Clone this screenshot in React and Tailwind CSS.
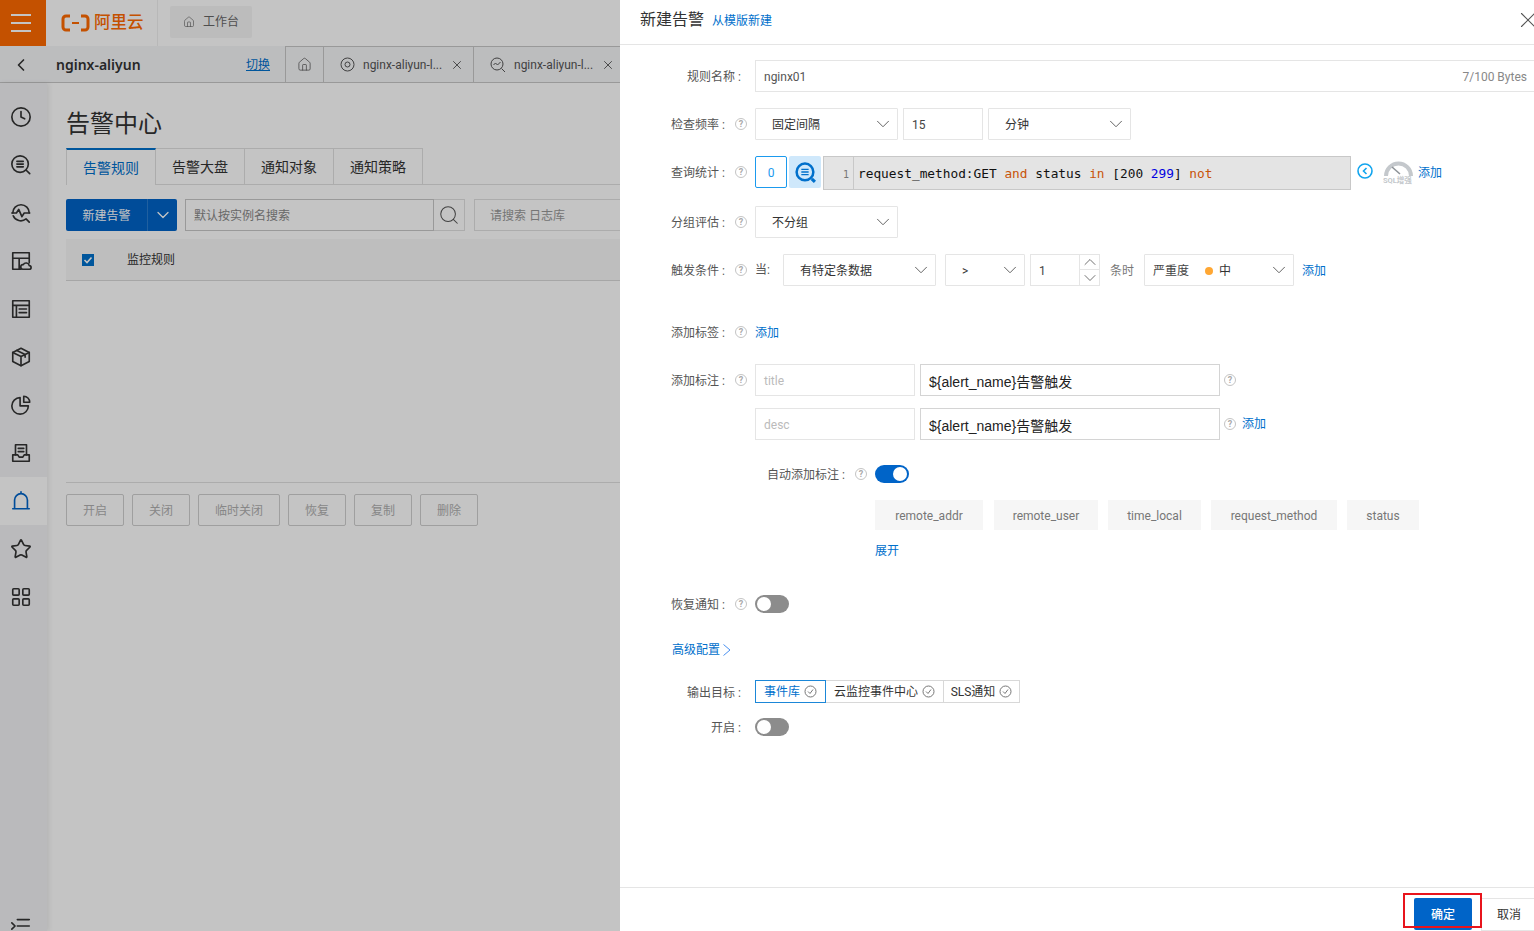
import React from "react";
import { ChevronDown, ChevronUp, ChevronLeft, Search, X, Star, LayoutGrid, Clock, House } from "lucide-react";

const I = ({ children, size = 22, vb = 24, color = "#333", w = 1.8, className = "" }) => (
  <svg width={size} height={size} viewBox={`0 0 ${vb} ${vb}`} fill="none" stroke={color} strokeWidth={w} strokeLinecap="round" strokeLinejoin="round" className={className}>
    {children}
  </svg>
);

const SideItem = ({ active, children }) => (
  <div className={"h-12 flex items-center justify-center pr-[5px] " + (active ? "bg-white" : "")}>{children}</div>
);

function Sidebar() {
  return (
    <div className="w-[47px] shrink-0 bg-[#f2f3f5] shadow-[2px_0_5px_rgba(0,0,0,0.08)] flex flex-col pt-[10px] relative">
      <SideItem><Clock size={22} strokeWidth={1.8} color="#333" /></SideItem>
      <SideItem>
        <I><circle cx="11" cy="11" r="9" /><path d="M7.5 8h7M7.5 11h7M7.5 14h7M18 18l3.5 3.5" /></I>
      </SideItem>
      <SideItem>
        <I><path d="M3 12a9 9 0 1 1 18 0M3.5 15a9 9 0 0 0 14 3.5l3.5 3.5" /><path d="M2 12h5l2.5-4 3.5 8 2.5-4h6" /></I>
      </SideItem>
      <SideItem>
        <I><path d="M3 3h18v11M3 3v18h9M3 9h18M10 9v12" /><path d="M14 21a2.5 2.5 0 0 1 .5-5 3.5 3.5 0 0 1 6.5 1 2 2 0 0 1 0 4z" /></I>
      </SideItem>
      <SideItem>
        <I><rect x="3" y="3" width="18" height="18" /><path d="M3 8h18M7 8v13M10 12h8M10 16h8" /></I>
      </SideItem>
      <SideItem>
        <I><path d="M12 2.5 21 7v10l-9 4.500L3 17V7z" /><path d="M3 7l9 4.500L21 7M12 11.500V21.500M7.500 4.800l9 4.500v3" /></I>
      </SideItem>
      <SideItem>
        <I><path d="M11 4a9 9 0 1 0 9 9h-9z" /><path d="M15 2.500a6.500 6.500 0 0 1 6.500 6.500H15z" /></I>
      </SideItem>
      <SideItem>
        <I><path d="M6 14V3h12v11M9 7h6M9 10.500h6" /><path d="M3 14h5.500l1.500 2.500h4l1.500-2.500H21v7H3z" /></I>
      </SideItem>
      <SideItem active>
        <I color="#0064c8"><path d="M5 20V11a7 7 0 0 1 14 0v9M3 20.500h18M12 3V2" /></I>
      </SideItem>
      <SideItem><Star size={22} strokeWidth={1.8} color="#333" /></SideItem>
      <SideItem><LayoutGrid size={22} strokeWidth={1.8} color="#333" /></SideItem>
      <div className="mt-auto h-[16px] flex justify-center overflow-hidden pr-[5px]">
        <I className="shrink-0"><path d="M8 5h13M8 12h13M8 19h13M2 8.500 5.500 12 2 15.500" /></I>
      </div>
    </div>
  );
}

const AppTab = ({ icon, wide }) => (
  <div className={"border-l border-[#c8c8c8] h-full flex items-center " + (wide ? "w-[150px] pl-[16px]" : "w-[38px] justify-center")}>
    {icon}
    {wide && (
      <>
        <span className="ml-[8px] text-[#555] text-xs w-[84px] whitespace-nowrap pt-[1px]">nginx-aliyun-l...</span>
        <X size={14} strokeWidth={1.3} color="#333" className="ml-[3px] mt-[1px]" />
      </>
    )}
  </div>
);

const PageTab = ({ active, children, w }) => (
  <div className={"h-[36px] flex items-center justify-center text-sm border-r border-[#e0e0e0] " + w + " " + (active ? "border-t-2 border-t-[#0070cc] text-[#0070cc] bg-white mb-[-1px] h-[37px] border-l border-l-[#e0e0e0]" : "border-t text-[#333] border-t-[#e0e0e0]")}>
    {children}
  </div>
);

const Disabled = ({ children, w }) => (
  <div className={"h-[32px] rounded-[2px] border border-[#cfcfcf] text-[#b0b0b0] text-xs flex items-center justify-center pt-[1px] " + w}>{children}</div>
);

function LeftPage() {
  return (
    <div className="w-[620px] h-full shrink-0 relative overflow-hidden bg-white flex flex-col">
      <div className="h-[46px] flex shrink-0 bg-white">
        <div className="w-[46px] bg-[#ff6a00] flex flex-col items-center justify-center gap-[6px] pr-[4px]">
          <span className="w-[20px] h-[2px] bg-white" />
          <span className="w-[20px] h-[2px] bg-white" />
          <span className="w-[20px] h-[2px] bg-white" />
        </div>
        <div className="w-[112px] border-r border-[#f0f0f0] flex items-center pl-[15px] gap-[4px]">
          <svg width="29" height="18" viewBox="0 0 29 18" fill="none" stroke="#ff6a00" strokeWidth="3" className="shrink-0">
            <path d="M9 2H5a3 3 0 0 0-3 3v8a3 3 0 0 0 3 3h4M20 2h4a3 3 0 0 1 3 3v8a3 3 0 0 1-3 3h-4" />
            <path d="M11 9h7" strokeWidth="2" />
          </svg>
          <span className="text-[#ff6a00] text-[16.5px] font-medium leading-none whitespace-nowrap">阿里云</span>
        </div>
        <div className="ml-[12px] mt-[6px] w-[82px] h-[32px] bg-[#f5f5f5] rounded-[2px] flex items-center justify-center gap-[8px] text-xs text-[#666]">
          <House size={12} strokeWidth={1.3} color="#666" />
          工作台
        </div>
      </div>
      <div className="h-[37px] flex shrink-0 bg-[#f5f6f8] border-b border-[#c8c8c8]">
        <div className="w-[285px] shrink-0 flex items-center pt-[1px]">
          <ChevronLeft size={20} strokeWidth={2} color="#333" className="ml-[11px]" />
          <span className="ml-[25px] text-sm font-semibold text-[#333] font-['Noto_Sans',sans-serif]">nginx-aliyun</span>
          <span className="ml-[auto] mr-[15px] text-xs underline text-[#0070cc]">切换</span>
        </div>
        <div className="flex flex-1 border-t border-[#c8c8c8]">
          <AppTab icon={<House size={15} strokeWidth={1.2} color="#555" />} />
          <AppTab wide icon={<svg width="15" height="15" viewBox="0 0 15 15" fill="none" stroke="#555" className="shrink-0"><circle cx="7.500" cy="7.500" r="6.500" /><circle cx="7.500" cy="7.500" r="2.500" /></svg>} />
          <AppTab wide icon={<svg width="16" height="16" viewBox="0 0 16 16" fill="none" stroke="#555" className="shrink-0"><circle cx="7" cy="7" r="6" /><path d="M3.500 8l2-2 2 2 3-3M11.500 11.500 15 15" /></svg>} />
        </div>
      </div>
      <div className="flex flex-1 min-h-0">
        <Sidebar />
        <div className="flex-1 pl-[19px] min-w-0">
          <div className="mt-[25px] text-2xl leading-[32px] text-[#333]">告警中心</div>
          <div className="mt-[8px] flex border-b border-[#e0e0e0]">
            <PageTab active w="w-[90px]">告警规则</PageTab>
            <PageTab w="w-[89px]">告警大盘</PageTab>
            <PageTab w="w-[89px]">通知对象</PageTab>
            <PageTab w="w-[89px]">通知策略</PageTab>
          </div>
          <div className="mt-[14px] flex">
            <div className="w-[111px] h-[32px] rounded-[2px] bg-[#0064c8] flex text-white text-xs">
              <div className="w-[81px] flex items-center justify-center pt-[1px]">新建告警</div>
              <div className="flex-1 border-l border-[#2a7dd0] flex items-center justify-center">
                <ChevronDown size={20} strokeWidth={1.5} color="#fff" />
              </div>
            </div>
            <div className="ml-[8px] w-[249px] h-[32px] border border-[#c8c8c8] flex items-center pl-[8px] pt-[1px] text-xs text-[#888]">默认按实例名搜索</div>
            <div className="w-[31px] h-[32px] border border-l-0 border-[#e0e0e0] flex items-center justify-center">
              <Search size={22} strokeWidth={1.1} color="#555" />
            </div>
            <div className="ml-[9px] flex-1 h-[32px] border border-r-0 border-[#e0e0e0] flex items-center pl-[15px] pt-[1px] text-xs text-[#999]">请搜索 日志库</div>
          </div>
          <div className="mt-[8px] h-[42px] bg-[#f7f7f7] border-b border-[#d8d8d8] flex items-center pl-[16px]">
            <span className="w-[12px] h-[12px] bg-[#0070cc] flex items-center justify-center">
              <svg width="10" height="10" viewBox="0 0 10 10" fill="none" stroke="#fff" strokeWidth="1.600"><path d="M1.500 5l2.500 2.500 4.500-5" /></svg>
            </span>
            <span className="ml-[33px] text-xs text-[#333] pt-[1px]">监控规则</span>
          </div>
          <div className="mt-[201px] border-t border-[#e0e0e0] pt-[11px] flex gap-[8px]">
            <Disabled w="w-[58px]">开启</Disabled>
            <Disabled w="w-[58px]">关闭</Disabled>
            <Disabled w="w-[82px]">临时关闭</Disabled>
            <Disabled w="w-[58px]">恢复</Disabled>
            <Disabled w="w-[58px]">复制</Disabled>
            <Disabled w="w-[58px]">删除</Disabled>
          </div>
        </div>
      </div>
      <div className="absolute inset-0 bg-[rgba(0,0,0,0.23)]" />
    </div>
  );
}

const Help = ({ className = "" }) => (
  <span className={"w-[12px] h-[12px] shrink-0 rounded-full border-[1.5px] border-[#c4c4c4] text-[#aaa] text-[9px] font-bold leading-none flex items-center justify-center " + className}>?</span>
);

const Colon = () => <span className="inline-block w-[6px] text-right">:</span>;

const Row = ({ mt, label, help, children, h = "h-[32px]" }) => (
  <div className={"flex items-start " + mt}>
    <div className={"w-[135px] shrink-0 flex items-center justify-end text-xs text-[#555] " + h + " " + (help ? "pr-[8px] gap-[10px]" : "pr-[14px]")}>
      {label && <span className="pt-[2px] whitespace-nowrap">{label}<Colon /></span>}
      {help && <Help />}
    </div>
    {children}
  </div>
);

const Select = ({ w, children, pl = "pl-[16px]" }) => (
  <div className={"h-[32px] border border-[#e5e5e5] rounded-[1px] flex items-center justify-between pr-[3px] text-xs text-[#333] shrink-0 " + w + " " + pl}>
    <span className="flex items-center pt-[1px]">{children}</span>
    <ChevronDown size={22} strokeWidth={1} color="#555" className="-mt-[1px]" />
  </div>
);

const Link = ({ children, className = "" }) => <span className={"text-xs text-[#0070cc] whitespace-nowrap " + className}>{children}</span>;

const Toggle = ({ on }) => (
  <div className={"w-[34px] h-[18px] rounded-full flex items-center px-[2px] " + (on ? "bg-[#0064c8] justify-end" : "bg-[#8c8c8c] justify-start")}>
    <span className="w-[14px] h-[14px] rounded-full bg-white" />
  </div>
);

const NoteRow = ({ mt, ph, label, add }) => (
  <Row mt={mt} label={label} help={!!label}>
    <div className="w-[160px] h-[32px] border border-[#e5e5e5] flex items-center pl-[8px] pt-[1px] text-xs text-[#bbb] shrink-0">{ph}</div>
    <div className="ml-[5px] w-[300px] h-[32px] border border-[#d4d4d4] flex items-center pl-[8px] pt-[5px] text-[14px] text-[#222] font-['Liberation_Sans','Noto_Sans_CJK_SC',sans-serif] shrink-0">{"${alert_name}告警触发"}</div>
    <div className="h-[32px] flex items-center ml-[4px] gap-[6px]">
      <Help />
      {add && <Link>添加</Link>}
    </div>
  </Row>
);

const Target = ({ active, w, children }) => (
  <div className={"h-[23px] flex items-center justify-center gap-[4px] text-xs border shrink-0 " + w + " " + (active ? "border-[#1b87d8] text-[#0070cc]" : "border-[#d8d8d8] border-l-0 text-[#333]")}>
    <span className="pt-[1px]">{children}</span>
    <svg width="13" height="13" viewBox="0 0 13 13" fill="none" stroke="#777"><circle cx="6.500" cy="6.500" r="5.500" /><path d="M4 6.500l2 2 3-4" /></svg>
  </div>
);

const Chip = ({ children, w }) => (
  <div className={"h-[30px] bg-[#f6f6f6] text-xs text-[#777] flex items-center justify-center pt-[1px] " + w}>{children}</div>
);

function Drawer() {
  return (
    <div className="w-[914px] h-full shrink-0 bg-white flex flex-col relative">
      <div className="h-[45px] shrink-0 border-b border-[#e5e5e5] flex items-center pl-[20px] pb-[4px]">
        <span className="text-base text-[#333]">新建告警</span>
        <Link className="ml-[8px] mt-[2px]">从模版新建</Link>
        <X size={26} strokeWidth={1} color="#555" className="ml-auto -mr-[7px]" />
      </div>
      <Row mt="mt-[15px]" label="规则名称">
        <div className="flex-1 h-[32px] -mr-[2px] border border-[#e5e5e5] flex items-center justify-between pl-[8px] pr-[8px] pt-[1px] text-xs">
          <span className="text-[#555]">nginx01</span>
          <span className="text-[#888]">7/100 Bytes</span>
        </div>
      </Row>
      <Row mt="mt-[16px]" label="检查频率" help>
        <Select w="w-[143px]">固定间隔</Select>
        <div className="ml-[5px] w-[80px] h-[32px] border border-[#e5e5e5] flex items-center pl-[8px] pt-[1px] text-xs text-[#444]">15</div>
        <Select w="w-[143px] ml-[5px]">分钟</Select>
      </Row>
      <Row mt="mt-[16px]" label="查询统计" help>
        <div className="w-[32px] h-[32px] border border-[#1b9aee] rounded-[2px] flex items-center justify-center pt-[1px] text-xs text-[#1b9aee]">0</div>
        <div className="ml-[2px] w-[32px] h-[32px] bg-[#cfe8fb] rounded-[2px] flex items-center justify-center">
          <svg width="23" height="23" viewBox="0 0 22 22" fill="none" stroke="#0070cc" strokeWidth="2.400"><circle cx="10.500" cy="10.500" r="8" /><path d="M7 8h7M7 10.500h7M7 13h7" strokeWidth="1.300" /><path d="M17 17l3 3" strokeWidth="3" /></svg>
        </div>
        <div className="ml-[2px] w-[528px] h-[34px] bg-[#e4e4e4] border border-[#c8c8c8] flex font-['DejaVu_Sans_Mono',monospace] text-[12.8px]">
          <div className="w-[30px] border-r border-[#c8c8c8] flex items-center justify-end pr-[4px] pt-[2px] text-[10px] text-[#777]">1</div>
          <div className="pl-[4px] pt-[2px] flex items-center whitespace-pre text-[#111]">
            request_method:GET <span className="text-[#c8540a]">and</span> status <span className="text-[#c8540a]">in</span> [200 <span className="text-[#0000e0]">299</span>] <span className="text-[#c8540a]">not</span>
          </div>
        </div>
        <div className="h-[32px] flex items-center ml-[6px]">
          <svg width="16" height="16" viewBox="0 0 16 16" fill="none" stroke="#12a5ee" strokeWidth="1.600" className="-mt-[2px]"><circle cx="8" cy="8" r="7" /><path d="M9.500 5 6.500 8l3 3" /></svg>
          <div className="relative ml-[10px] w-[31px] h-[26px] -mt-[2px]">
            <svg width="31" height="20" viewBox="0 0 31 20" fill="none" stroke="#c4c8cc" strokeWidth="4" className="absolute left-0 top-[3px]"><path d="M3 15A12.500 12.500 0 0 1 28 15" /><path d="M9 6l8 7" stroke="#8d9297" strokeWidth="1.600" /></svg>
            <span className="absolute left-0 bottom-0 text-[7.5px] leading-none font-bold text-[#c4c8cc] whitespace-nowrap">SQL增强</span>
          </div>
          <Link className="ml-[4px] pt-[1px]">添加</Link>
        </div>
      </Row>
      <Row mt="mt-[16px]" label="分组评估" help>
        <Select w="w-[143px]">不分组</Select>
      </Row>
      <Row mt="mt-[16px]" label="触发条件" help>
        <span className="w-[28px] h-[32px] flex items-center text-xs text-[#555]">当:</span>
        <Select w="w-[153px]">有特定条数据</Select>
        <Select w="w-[80px] ml-[9px]">{">"}</Select>
        <div className="ml-[5px] w-[70px] h-[32px] border border-[#e5e5e5] flex text-xs text-[#444]">
          <span className="flex-1 flex items-center pl-[8px] pt-[1px]">1</span>
          <div className="w-[20px] border-l border-[#e5e5e5] flex flex-col">
            <div className="h-[15px] flex-none flex items-center justify-center border-b border-[#e5e5e5]"><ChevronUp size={20} strokeWidth={1} color="#555" className="shrink-0" /></div>
            <div className="h-[15px] flex-none flex items-center justify-center"><ChevronDown size={20} strokeWidth={1} color="#555" className="shrink-0" /></div>
          </div>
        </div>
        <span className="ml-[10px] w-[34px] h-[32px] flex items-center pt-[1px] text-xs text-[#777]">条时</span>
        <Select w="w-[150px]" pl="pl-[8px]">
          <span className="text-[#444]">严重度</span>
          <span className="ml-[16px] w-[8px] h-[8px] rounded-full bg-[#ffa733]" />
          <span className="ml-[6px]">中</span>
        </Select>
        <Link className="ml-[8px] h-[32px] flex items-center pt-[1px]">添加</Link>
      </Row>
      <Row mt="mt-[30px]" label="添加标签" help>
        <Link className="h-[32px] flex items-center pt-[1px]">添加</Link>
      </Row>
      <NoteRow mt="mt-[16px]" ph="title" label="添加标注" />
      <NoteRow mt="mt-[12px]" ph="desc" add />
      <div className="mt-[25px] ml-[147px] h-[18px] flex items-center text-xs text-[#555]">
        <span className="w-[88px] pt-[1px]">自动添加标注<Colon /></span>
        <Help />
        <span className="ml-[8px]"><Toggle on /></span>
      </div>
      <div className="mt-[17px] ml-[255px] flex gap-[10px]">
        <Chip w="w-[108px] mr-[1px]">remote_addr</Chip>
        <Chip w="w-[104px]">remote_user</Chip>
        <Chip w="w-[93px]">time_local</Chip>
        <Chip w="w-[126px]">request_method</Chip>
        <Chip w="w-[72px]">status</Chip>
      </div>
      <Link className="mt-[12px] ml-[255px] leading-[18px]">展开</Link>
      <Row mt="mt-[35px]" label="恢复通知" help h="h-[18px]">
        <Toggle />
      </Row>
      <div className="mt-[28px] ml-[52px] h-[18px] flex items-center">
        <Link>高级配置</Link>
        <svg width="10" height="12" viewBox="0 0 10 12" fill="none" stroke="#4a90f0" className="ml-[2px]"><path d="M1.500 .5 8 6l-6.500 5.500" /></svg>
      </div>
      <Row mt="mt-[21px]" label="输出目标" h="h-[23px]">
        <div className="flex">
          <Target active w="w-[71px]">事件库</Target>
          <Target w="w-[118px]">云监控事件中心</Target>
          <Target w="w-[76px]">SLS通知</Target>
        </div>
      </Row>
      <Row mt="mt-[15px]" label="开启" h="h-[18px]">
        <Toggle />
      </Row>
      <div className="mt-auto h-[44px] shrink-0 border-t border-[#e5e5e5] flex justify-end items-start pt-[10px] relative -mr-[2px] overflow-visible">
        <div className="w-[58px] h-[32px] rounded-[2px] bg-[#0064c8] text-white text-xs font-medium flex items-center justify-center pt-[2px]">确定</div>
        <div className="ml-[9px] w-[55px] h-[33px] border border-r-0 border-[#e5e5e5] text-xs text-[#333] flex items-center justify-center pt-[1px]">取消</div>
        <div className="absolute left-[783px] top-[5px] w-[79px] h-[35px] border-2 border-[#e8141c]" />
      </div>
    </div>
  );
}

export default function App() {
  return (
    <div className="flex w-[1534px] h-[931px] overflow-hidden bg-white font-['Roboto','Noto_Sans_CJK_SC',sans-serif]">
      <LeftPage />
      <Drawer />
    </div>
  );
}
